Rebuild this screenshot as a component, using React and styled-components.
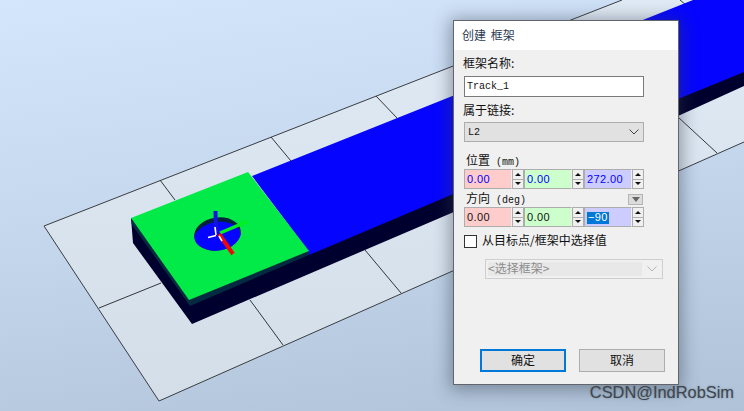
import React from "react";
import styled, { createGlobalStyle } from "styled-components";

const GlobalStyle = createGlobalStyle`
  html, body {
    margin: 0;
    padding: 0;
    overflow: hidden;
  }
`;

const Desktop = styled.div`
  position: relative;
  width: 744px;
  height: 411px;
  overflow: hidden;
  background: linear-gradient(172deg, #d4e6fc 0%, #c3d6ec 50%, #afc2d7 100%);
  font-family: "Noto Sans CJK SC", "Liberation Sans", sans-serif;
  font-size: 12px;
  color: #111;
`;

const SceneSvg = styled.svg`
  position: absolute;
  inset: 0;
`;

const Dialog = styled.div`
  position: absolute;
  left: 453px;
  top: 20px;
  width: 226px;
  height: 365px;
  box-sizing: border-box;
  display: flex;
  flex-direction: column;
  border: 1px solid #62666c;
  background: #f0f0f0;
  box-shadow: 0 2px 16px 3px rgba(50, 60, 75, 0.45);
`;

const TitleBar = styled.div`
  height: 29px;
  box-sizing: border-box;
  flex: none;
  display: flex;
  align-items: center;
  padding: 0 0 2px 8px;
  background: #fff;
  color: #2b3a55;
  white-space: pre;
  word-spacing: 2px;
`;

const Body = styled.div`
  flex: 1;
  display: flex;
  flex-direction: column;
  padding: 0 13px 12px 10px;
`;

const Label = styled.div`
  height: 16px;
  line-height: 14px;
  margin-top: ${(p) => p.$top}px;
  margin-left: ${(p) => p.$left || 0}px;
  white-space: pre;
`;

const Unit = styled.span`
  margin-left: 6px;
  font: 10px "Liberation Mono", monospace;
`;

const NameInput = styled.div`
  width: 180px;
  height: 21px;
  box-sizing: border-box;
  margin-top: 4px;
  padding-left: 2px;
  border: 1px solid #7a7a7a;
  background: #fff;
  font: 10px/19px "Liberation Mono", monospace;
`;

const Select = styled.div`
  width: 180px;
  height: 20px;
  box-sizing: border-box;
  margin-top: 3px;
  padding: 0 4px 0 3px;
  display: flex;
  align-items: center;
  justify-content: space-between;
  border: 1px solid #adadad;
  background: #e1e1e1;
  font: 10px "Liberation Mono", monospace;
`;

const Chevron = styled.svg`
  width: 10px;
  height: 6px;
  flex: none;
`;

const SpinRow = styled.div`
  display: flex;
  width: 180px;
  height: 20px;
`;

const Field = styled.div`
  width: 48px;
  flex: none;
  box-sizing: border-box;
  padding-left: 2px;
  border: 1px solid #adadad;
  border-right-color: #f0f0f0;
  background: ${(p) => p.$bg};
  color: ${(p) => p.$ink};
  font: 11px/18px "Liberation Sans", sans-serif;
  letter-spacing: 0.4px;
`;

const Selected = styled.span`
  display: inline-block;
  height: 12px;
  line-height: 11px;
  padding: 0 1px;
  background: #0078d7;
  color: #fff;
`;

const SpinButtons = styled.div`
  width: 12px;
  flex: none;
  display: flex;
  flex-direction: column;
  border: 1px solid #adadad;
  box-sizing: border-box;
  background: #f0f0f0;
`;

const SpinCell = styled.div`
  flex: 1;
  display: flex;
  align-items: center;
  justify-content: center;

  & + & {
    border-top: 1px solid #adadad;
  }

  &::before {
    content: "";
    border-left: 3px solid transparent;
    border-right: 3px solid transparent;
    border-${(p) => (p.$down ? "top" : "bottom")}: 3px solid #111;
  }
`;

const LabelRow = styled.div`
  display: flex;
  align-items: flex-end;
  justify-content: space-between;
  width: 180px;
  height: 16px;
  margin-top: 2px;
`;

const MiniDrop = styled.div`
  width: 15px;
  height: 11px;
  box-sizing: border-box;
  margin: 0 1px 2px 0;
  display: flex;
  align-items: center;
  justify-content: center;
  border: 1px solid #b5b5b5;
  background: #dcdcdc;

  &::before {
    content: "";
    border-left: 4px solid transparent;
    border-right: 4px solid transparent;
    border-top: 5px solid #666;
  }
`;

const CheckRow = styled.div`
  display: flex;
  align-items: center;
  gap: 5px;
  height: 14px;
  line-height: 12px;
  margin-top: 7px;
`;

const CheckBox = styled.div`
  width: 13px;
  height: 13px;
  box-sizing: border-box;
  border: 1px solid #333;
  background: #fff;
`;

const CheckText = styled.span`
  margin-top: -2px;
`;

const DisabledCombo = styled.div`
  width: 178px;
  height: 20px;
  box-sizing: border-box;
  margin: 11px 0 0 21px;
  padding: 2px 5px 2px 2px;
  display: flex;
  align-items: center;
  justify-content: space-between;
  gap: 5px;
  border: 1px solid #cfcfcf;
  color: #8c8c8c;
`;

const ComboText = styled.div`
  flex: 1;
  height: 14px;
  line-height: 12px;
  background: #e8e8e8;
`;

const ButtonRow = styled.div`
  display: flex;
  justify-content: flex-end;
  gap: 13px;
  margin-top: auto;
`;

const Button = styled.div`
  width: 86px;
  height: 23px;
  box-sizing: border-box;
  display: flex;
  align-items: center;
  justify-content: center;
  padding-bottom: 2px;
  border: ${(p) => (p.$primary ? "2px solid #0078d7" : "1px solid #adadad")};
  background: #e1e1e1;
  color: #111;
`;

const Watermark = styled.div`
  position: absolute;
  right: 10px;
  bottom: 10px;
  font: 16.4px/18px "Liberation Sans", sans-serif;
  color: #40464f;
  text-shadow: 0 0 2px rgba(60, 70, 85, 0.45);
`;

const GridLines = [
  "M160 180L175 200",
  "M271 137L291 161",
  "M376 96L397 118",
  "M678 117L717 153",
  "M680 0L686 5",
  "M99 308L161 283",
  "M250 300L283 345",
  "M365 250L401 293",
];

function Scene() {
  return (
    <SceneSvg width="744" height="411" viewBox="0 0 744 411">
      <defs>
        <linearGradient id="floor" x1="0" y1="0" x2="0" y2="1">
          <stop offset="0" stopColor="#e0eaf5" />
          <stop offset="1" stopColor="#d3dee9" />
        </linearGradient>
        <clipPath id="hole">
          <ellipse cx="217.5" cy="234" rx="23.5" ry="16.5" transform="rotate(-9 217.5 234)" />
        </clipPath>
      </defs>
      {/* floor plate */}
      <polygon points="44,226 622,0 744,0 744,142 159,401" fill="url(#floor)" />
      <path d="M44 226L622 0M44 226L159 401L744 142" fill="none" stroke="#3a3d40" strokeWidth="1" />
      {GridLines.map((d) => (
        <path key={d} d={d} fill="none" stroke="#33363a" strokeWidth="1" />
      ))}
      {/* rail */}
      <polygon points="131,218 133,243 192,324 678,116 744,86 744,60 309,250" fill="#00002e" />
      <polygon points="252,176 693,0 744,0 744,72 678,99 309,255 300,240" fill="#0505ff" />
      {/* plate on the rail */}
      <polygon points="131,218 189,299 309,251 309,255 190,306 132,225" fill="#022a40" />
      <polygon points="131,218 248,172 309,251 189,300" fill="#02ea47" />
      {/* hole */}
      <ellipse cx="217.5" cy="234" rx="23.5" ry="16.5" transform="rotate(-9 217.5 234)" fill="#02233c" />
      <g clipPath="url(#hole)">
        <ellipse cx="217.5" cy="238.5" rx="24" ry="16.5" transform="rotate(-9 217.5 238.5)" fill="#0505ff" />
      </g>
      {/* frame axes */}
      <path d="M215.5 211L216 232" stroke="#1414e0" strokeWidth="4" />
      <path d="M220 233L247 221.5" stroke="#02ef20" strokeWidth="3.5" />
      <path d="M219 234L233 254" stroke="#f00808" strokeWidth="4" />
      <path d="M216 235.5L208 237.5M216 235L215 227M219 236L222 241" stroke="#fff" strokeWidth="1.6" fill="none" />
    </SceneSvg>
  );
}

function Spin({ bg, ink, value, selected }) {
  return (
    <>
      <Field $bg={bg} $ink={ink}>
        {selected ? <Selected>{value}</Selected> : value}
      </Field>
      <SpinButtons>
        <SpinCell />
        <SpinCell $down />
      </SpinButtons>
    </>
  );
}

function ChevronDown({ color }) {
  return (
    <Chevron viewBox="0 0 10 6">
      <path d="M0.5 0.5L5 5L9.5 0.5" fill="none" stroke={color} strokeWidth="1" />
    </Chevron>
  );
}

export default function App() {
  return (
    <Desktop>
      <GlobalStyle />
      <Scene />
      <Dialog>
        <TitleBar>创建 框架</TitleBar>
        <Body>
          <Label $top={6} $left={-1}>框架名称:</Label>
          <NameInput>Track_1</NameInput>
          <Label $top={6} $left={-1}>属于链接:</Label>
          <Select>
            L2
            <ChevronDown color="#444" />
          </Select>
          <Label $top={11} $left={2}>位置<Unit>(mm)</Unit></Label>
          <SpinRow>
            <Spin bg="#ffcccc" ink="#0000ff" value="0.00" />
            <Spin bg="#ccffcc" ink="#0000ff" value="0.00" />
            <Spin bg="#ccccff" ink="#0000ff" value="272.00" />
          </SpinRow>
          <LabelRow>
            <Label $top={0} $left={2}>方向<Unit>(deg)</Unit></Label>
            <MiniDrop />
          </LabelRow>
          <SpinRow>
            <Spin bg="#ffcccc" ink="#111" value="0.00" />
            <Spin bg="#ccffcc" ink="#111" value="0.00" />
            <Spin bg="#ccccff" ink="#111" value="−90" selected />
          </SpinRow>
          <CheckRow>
            <CheckBox />
            <CheckText>从目标点/框架中选择值</CheckText>
          </CheckRow>
          <DisabledCombo>
            <ComboText>&lt;选择框架&gt;</ComboText>
            <ChevronDown color="#b5b5b5" />
          </DisabledCombo>
          <ButtonRow>
            <Button $primary>确定</Button>
            <Button>取消</Button>
          </ButtonRow>
        </Body>
      </Dialog>
      <Watermark>CSDN@IndRobSim</Watermark>
    </Desktop>
  );
}
